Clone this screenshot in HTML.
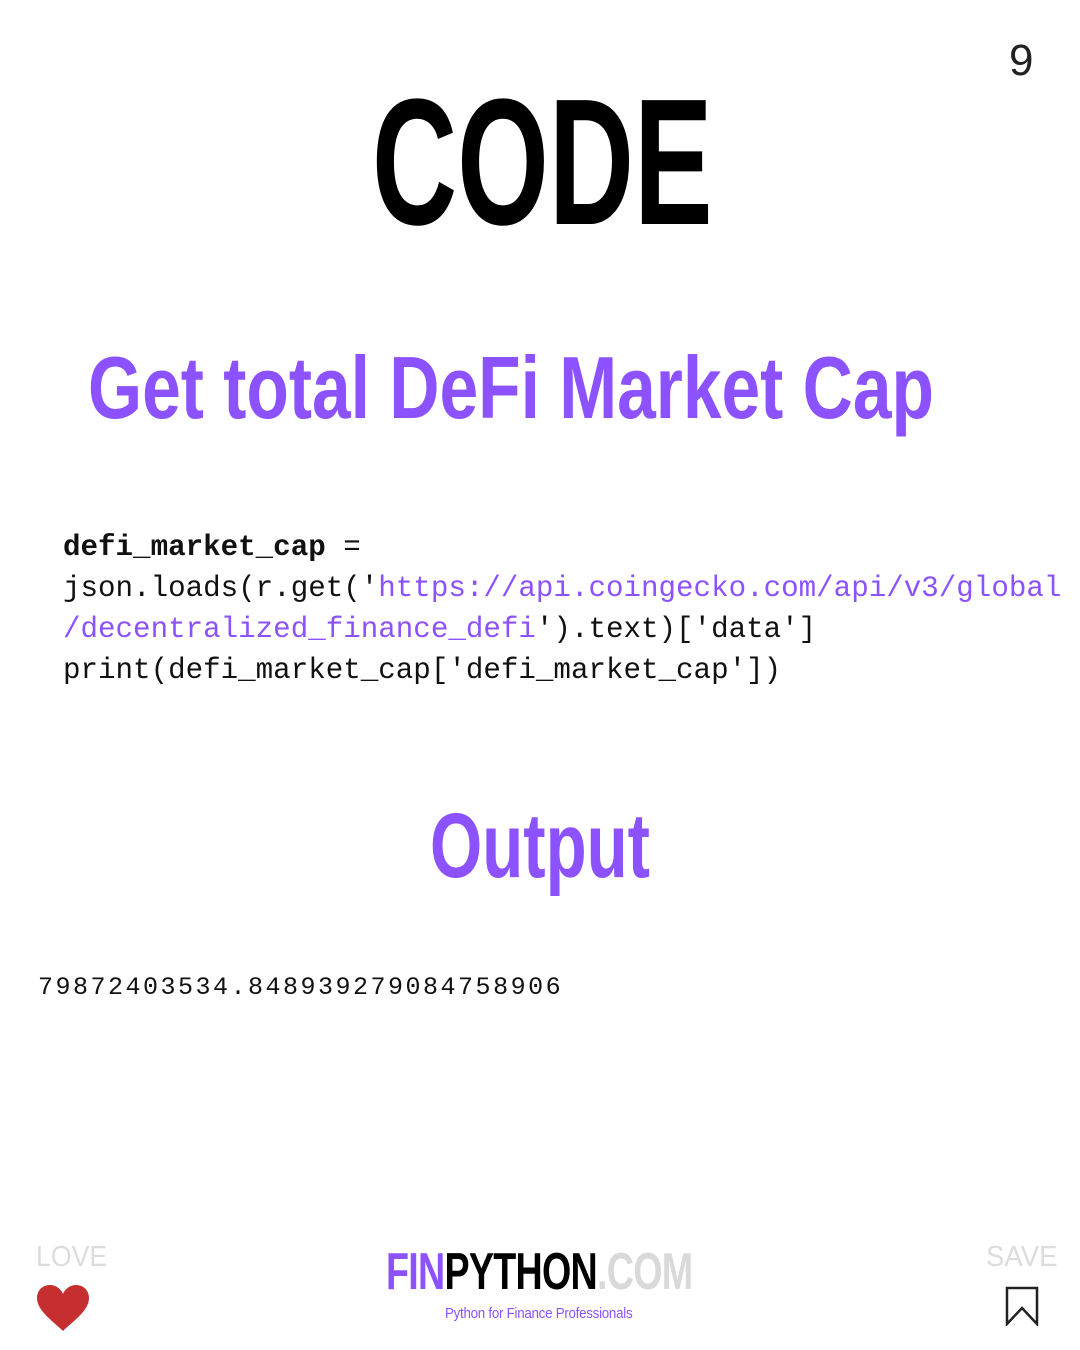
<!DOCTYPE html>
<html><head><meta charset="utf-8"><style>
html,body{margin:0;padding:0;background:#fff;}
body{width:1080px;height:1350px;position:relative;overflow:hidden;font-family:"Liberation Sans",sans-serif;}
.abs{position:absolute;white-space:nowrap;}
.cond{display:inline-block;transform-origin:left top;font-weight:bold;}
.code{font-family:"Liberation Mono",monospace;font-size:29.2px;line-height:41px;color:#111;}
.p{color:#8c52ff;}
</style></head><body>
<div class="abs" style="left:1009px;top:36px;font-size:44px;color:#222;font-weight:300;">9</div>
<div class="abs" style="left:372px;top:68px;"><span class="cond" style="font-size:180px;line-height:190px;transform:scaleX(0.655);color:#000;">CODE</span></div>
<div class="abs" style="left:88px;top:338px;"><span class="cond" style="font-size:88px;line-height:100px;transform:scaleX(0.79);color:#8c52ff;">Get total DeFi Market Cap</span></div>
<div class="abs code" style="left:63px;top:527px;"><b>defi_market_cap</b> =<br>json.loads(r.get('<span class="p">https://api.coingecko.com/api/v3/global</span><br><span class="p">/decentralized_finance_defi</span>').text)['data']<br>print(defi_market_cap['defi_market_cap'])</div>
<div class="abs" style="left:430px;top:794px;"><span class="cond" style="font-size:92px;line-height:104px;transform:scaleX(0.73);color:#8c52ff;">Output</span></div>
<div class="abs" style="left:38px;top:973px;font-family:'Liberation Mono',monospace;font-size:25px;letter-spacing:2.5px;color:#111;">79872403534.848939279084758906</div>
<div class="abs" style="left:36px;top:1241px;"><span class="cond" style="font-weight:normal;font-size:29px;transform:scaleX(0.92);color:#dcdcdc;">LOVE</span></div>
<svg class="abs" style="left:36px;top:1284px" width="54" height="48" viewBox="0 0 54 48"><path d="M27 47 C18 38 1 27 1 14 C1 6 7 1 14 1 C20 1 25 5 27 10 C29 5 34 1 40 1 C47 1 53 6 53 14 C53 27 36 38 27 47Z" fill="#c62f2f"/></svg>
<div class="abs" style="left:986px;top:1241px;"><span class="cond" style="font-weight:normal;font-size:29px;transform:scaleX(0.95);color:#dcdcdc;">SAVE</span></div>
<svg class="abs" style="left:1005px;top:1286px" width="34" height="40" viewBox="0 0 34 40"><path d="M2 2 H32 V38 L17 22 L2 38 Z" fill="none" stroke="#222" stroke-width="2.5" stroke-linejoin="miter"/></svg>
<div class="abs" style="left:386px;top:1244px;"><span class="cond" style="font-size:52px;line-height:56px;transform:scaleX(0.724);letter-spacing:-1px;"><span style="color:#8c52ff">FIN</span><span style="color:#000">PYTHON</span><span style="color:#d9d9d9">.COM</span></span></div>
<div class="abs" style="left:445px;top:1305px;"><span class="cond" style="font-weight:normal;font-size:15px;transform:scaleX(0.89);color:#8c52ff;letter-spacing:-0.3px;">Python for Finance Professionals</span></div>
</body></html>
